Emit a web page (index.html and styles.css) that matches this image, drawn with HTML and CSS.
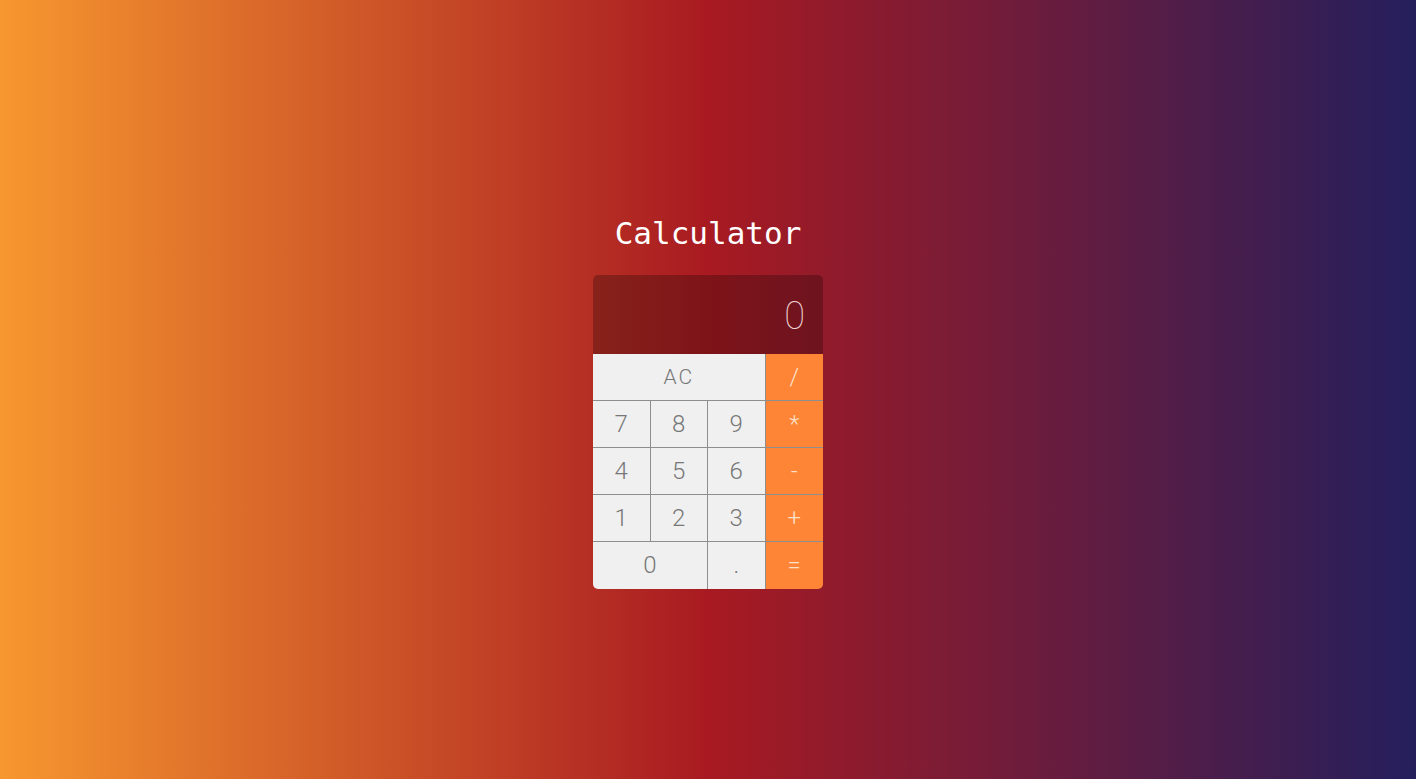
FILE: index.html
```html
<!DOCTYPE html>
<html>
<head>
<meta charset="utf-8">
<link rel="stylesheet" href="styles.css">
</head>
<body>
<main class="page">
  <h1 class="title">Calculator</h1>
  <div class="calc">
    <div class="display">0</div>
    <div class="keys">
      <button class="key span3">AC</button>
      <button class="key op">/</button>
      <button class="key">7</button>
      <button class="key">8</button>
      <button class="key">9</button>
      <button class="key op">*</button>
      <button class="key">4</button>
      <button class="key">5</button>
      <button class="key">6</button>
      <button class="key op">-</button>
      <button class="key">1</button>
      <button class="key">2</button>
      <button class="key">3</button>
      <button class="key op">+</button>
      <button class="key span2">0</button>
      <button class="key">.</button>
      <button class="key op">=</button>
    </div>
  </div>
</main>
</body>
</html>
```
FILE: styles.css
```css
html, body {
  margin: 0;
  height: 100%;
}
body {
  background: linear-gradient(to right, #f7972f 0%, #a81a21 50%, #241f5c 100%);
  font-family: "DejaVu Sans Mono", "Liberation Mono", monospace;
}
.page {
  box-sizing: border-box;
  height: 100%;
  padding-top: 22px;
  display: flex;
  flex-direction: column;
  align-items: center;
  justify-content: center;
}
.title {
  margin: 0 0 22px;
  color: #fff;
  font-weight: 400;
  font-size: 31px;
  line-height: 40px;
}
.calc {
  width: 230px;
  border-radius: 5px;
  overflow: hidden;
}
.display {
  height: 79px;
  background: rgba(0, 0, 0, 0.25);
  color: #f1d6d6;
  font-family: Roboto, "DejaVu Sans Mono", sans-serif;
  font-size: 38px;
  font-weight: 100;
  text-align: right;
  padding: 0 18px;
  line-height: 82px;
}
.keys {
  display: grid;
  grid-template-columns: repeat(4, 1fr);
  grid-auto-rows: 47px;
}
.key {
  margin: 0;
  border: 0;
  border-right: 1px solid #8e8e8e;
  border-bottom: 1px solid #8e8e8e;
  background: #f0f0f0;
  color: #777;
  font-family: Roboto, "DejaVu Sans Mono", sans-serif;
  font-size: 24px;
  font-weight: 300;
  padding: 0;
}
.key.span3 { font-size: 21px; letter-spacing: 2px; }
.span2 { grid-column: span 2; }
.span3 { grid-column: span 3; }
.op {
  background: #fd8535;
  color: #fde0c8;
  border-right: 0;
}
.keys .key:nth-last-child(-n+3) { border-bottom: 0; }
```
